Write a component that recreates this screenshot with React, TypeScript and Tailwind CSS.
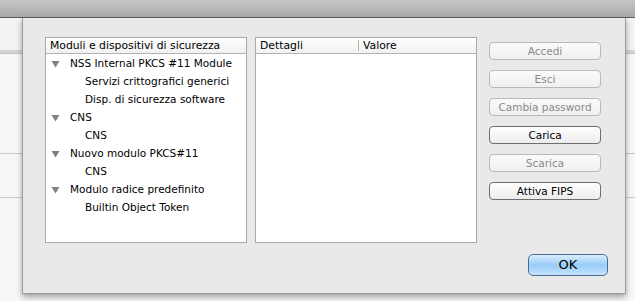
const tree = [
  { label: "NSS Internal PKCS #11 Module", children: ["Servizi crittografici generici", "Disp. di sicurezza software"] },
  { label: "CNS", children: ["CNS"] },
  { label: "Nuovo modulo PKCS#11", children: ["CNS"] },
  { label: "Modulo radice predefinito", children: ["Builtin Object Token"] },
];

const buttons = [
  { label: "Accedi", enabled: false },
  { label: "Esci", enabled: false },
  { label: "Cambia password", enabled: false },
  { label: "Carica", enabled: true },
  { label: "Scarica", enabled: false },
  { label: "Attiva FIPS", enabled: true },
];

const Triangle = () => (
  <svg width="9" height="8" viewBox="0 0 9 8" className="shrink-0">
    <path d="M0.5 1 L8.5 1 L4.5 7.5 Z" fill="#808080" />
  </svg>
);

const SideStrip = () => (
  <div className="flex flex-col h-full bg-[#f7f7f7]">
    <div className="h-[32px] bg-[#f3f3f3]" />
    <div className="h-[4px] bg-[#d4d4d4] border-b border-[#c4c4c4]" />
    <div className="h-[100px] border-b border-[#c9c9c9]" />
    <div className="h-[44px] border-b border-[#c9c9c9]" />
    <div className="flex-1" />
  </div>
);

const App = () => {
  return (
    <div className="w-[635px] h-[301px] overflow-hidden bg-[#f7f7f7] flex flex-col font-['DejaVu_Sans',sans-serif]">
      {/* parent window toolbar */}
      <div className="h-[18px] shrink-0 bg-gradient-to-b from-[#c6c6c6] to-[#a9a9a9] border-b border-[#5a5a5a]" />

      <div className="flex flex-1 min-h-0">
        <div className="w-[22px] shrink-0">
          <SideStrip />
        </div>

        {/* sheet */}
        <div className="w-[604px] h-[276px] shrink-0 bg-[#e9e9e9] border-x border-b border-[#9a9a9a] shadow-[0_3px_6px_rgba(0,0,0,0.35)] pt-[19px] pl-[22px] pr-[17px] flex flex-col relative z-10">
          <div className="flex">
            {/* modules tree */}
            <div className="w-[202px] h-[206px] bg-white border border-[#a9a9a9] flex flex-col">
              <div className="h-[16px] border-b border-[#b3b3b3] bg-gradient-to-b from-white to-[#f1f1f1] pl-[4px] text-[10.8px] leading-[15px] text-black">
                Moduli e dispositivi di sicurezza
              </div>
              <div className="pt-[1px] text-[10.5px] text-black">
                {tree.map((node) => (
                  <div key={node.label}>
                    <div className="h-[18px] flex items-center pl-[5px] gap-[10px]">
                      <Triangle />
                      <span>{node.label}</span>
                    </div>
                    {node.children.map((c, i) => (
                      <div key={i} className="h-[18px] flex items-center pl-[39px]">
                        {c}
                      </div>
                    ))}
                  </div>
                ))}
              </div>
            </div>

            {/* details table */}
            <div className="ml-[8px] w-[222px] h-[206px] bg-white border border-[#a9a9a9] flex flex-col">
              <div className="h-[16px] border-b border-[#b3b3b3] bg-gradient-to-b from-white to-[#f1f1f1] flex text-[10.8px] leading-[15px] text-black">
                <div className="w-[103px] pl-[4px] border-r border-[#b3b3b3] my-[2px] leading-[11px]">Dettagli</div>
                <div className="pl-[4px]">Valore</div>
              </div>
            </div>

            {/* action buttons */}
            <div className="ml-[12px] w-[112px] pt-[5px] flex flex-col gap-[10px]">
              {buttons.map((b) => (
                <button
                  key={b.label}
                  className={
                    b.enabled
                      ? "h-[18px] rounded-[4px] border border-[#6e6e6e] bg-gradient-to-b from-white to-[#ececec] text-[10.5px] leading-[16px] text-black"
                      : "h-[18px] rounded-[4px] border border-[#b9b9b9] bg-gradient-to-b from-[#fbfbfb] to-[#efefef] text-[10.5px] leading-[16px] text-[#8a8a8a]"
                  }
                >
                  {b.label}
                </button>
              ))}
            </div>
          </div>

          <div className="flex justify-end mt-[11px]">
            <button className="w-[80px] h-[22px] rounded-[5px] border border-[#4e6a98] bg-gradient-to-b from-[#dcedfc] via-[#98ccf8] to-[#c4e3fc] text-[13px] leading-[20px] text-black">
              OK
            </button>
          </div>
        </div>

        <div className="flex-1">
          <SideStrip />
        </div>
      </div>
    </div>
  );
};

export default App;
